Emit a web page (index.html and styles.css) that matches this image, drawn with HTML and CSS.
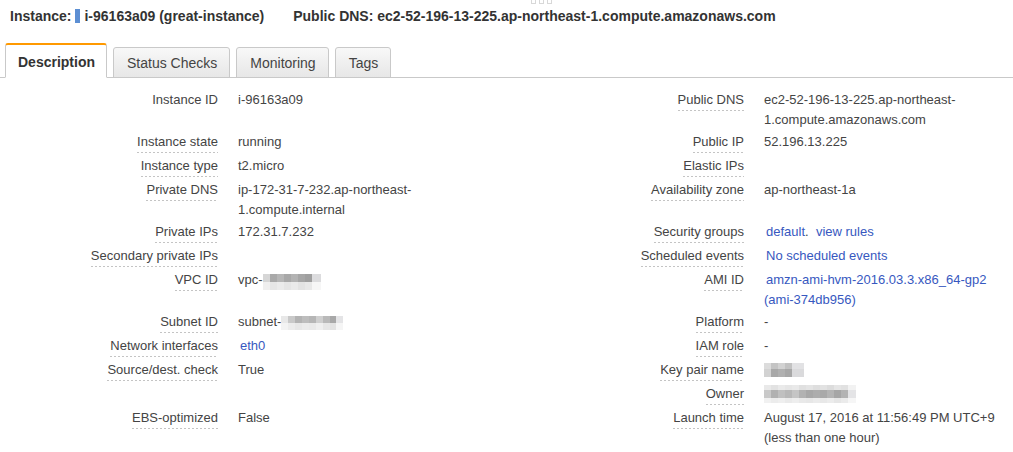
FILE: index.html
```html
<!DOCTYPE html>
<html lang="en">
<head>
<meta charset="utf-8">
<title>Instance details</title>
<link rel="stylesheet" href="styles.css">
</head>
<body>
<div class="grip"><span></span><span></span><span></span></div>
<header class="summary">
  <span class="summary-item"><b>Instance:</b> <span class="state-bar"></span><b>i-96163a09 (great-instance)</b></span>
  <span class="summary-item"><b>Public DNS: ec2-52-196-13-225.ap-northeast-1.compute.amazonaws.com</b></span>
</header>
<nav class="tabs">
  <div class="tab tab-active">Description</div>
  <div class="tab">Status Checks</div>
  <div class="tab">Monitoring</div>
  <div class="tab">Tags</div>
</nav>
<section class="details">
  <div class="lbl"><span class="plain">Instance ID</span></div>
  <div class="val">i-96163a09</div>
  <div class="lbl"><span>Public DNS</span></div>
  <div class="val">ec2-52-196-13-225.ap-northeast-<wbr>1.compute.amazonaws.com</div>

  <div class="lbl"><span>Instance state</span></div>
  <div class="val">running</div>
  <div class="lbl"><span>Public IP</span></div>
  <div class="val">52.196.13.225</div>

  <div class="lbl"><span>Instance type</span></div>
  <div class="val">t2.micro</div>
  <div class="lbl"><span>Elastic IPs</span></div>
  <div class="val"></div>

  <div class="lbl"><span>Private DNS</span></div>
  <div class="val">ip-172-31-7-232.ap-northeast-<wbr>1.compute.internal</div>
  <div class="lbl"><span>Availability zone</span></div>
  <div class="val">ap-northeast-1a</div>

  <div class="lbl"><span>Private IPs</span></div>
  <div class="val">172.31.7.232</div>
  <div class="lbl"><span>Security groups</span></div>
  <div class="val"><a class="link" href="#">default</a>.&nbsp; <a class="link link-tight" href="#">view rules</a></div>

  <div class="lbl"><span>Secondary private IPs</span></div>
  <div class="val"></div>
  <div class="lbl"><span>Scheduled events</span></div>
  <div class="val"><a class="link" href="#">No scheduled events</a></div>

  <div class="lbl"><span>VPC ID</span></div>
  <div class="val">vpc-<span class="redact redact-vpc"></span></div>
  <div class="lbl"><span>AMI ID</span></div>
  <div class="val"><a class="link" href="#">amzn-ami-hvm-2016.03.3.x86_64-gp2 (ami-374db956)</a></div>

  <div class="lbl"><span>Subnet ID</span></div>
  <div class="val">subnet-<span class="redact redact-subnet"></span></div>
  <div class="lbl"><span>Platform</span></div>
  <div class="val">-</div>

  <div class="lbl"><span>Network interfaces</span></div>
  <div class="val"><a class="link" href="#">eth0</a></div>
  <div class="lbl"><span>IAM role</span></div>
  <div class="val">-</div>

  <div class="lbl"><span>Source/dest. check</span></div>
  <div class="val">True</div>
  <div class="lbl"><span>Key pair name</span></div>
  <div class="val"><span class="redact redact-key"></span></div>

  <div class="lbl"></div>
  <div class="val"></div>
  <div class="lbl"><span>Owner</span></div>
  <div class="val"><span class="redact redact-owner"></span></div>

  <div class="lbl"><span>EBS-optimized</span></div>
  <div class="val">False</div>
  <div class="lbl"><span>Launch time</span></div>
  <div class="val"><span class="nowrap">August 17, 2016 at 11:56:49 PM UTC+9</span><span class="sub">(less than one hour)</span></div>
</section>
</body>
</html>
```
FILE: styles.css
```css
html, body {
  margin: 0;
  padding: 0;
  background: #fff;
}
body {
  font-family: "Liberation Sans", Arial, Helvetica, sans-serif;
  color: #444;
  font-size: 13px;
  position: relative;
  width: 1013px;
  overflow: hidden;
}

.grip {
  position: absolute;
  top: -1px;
  left: 531px;
  display: flex;
  gap: 3px;
}
.grip span {
  width: 3px;
  height: 3px;
  border: 1px solid #d8d8d8;
}

.summary {
  display: flex;
  gap: 29px;
  padding: 6px 0 0 10px;
  height: 20px;
  line-height: 20px;
  font-size: 14px;
  color: #333;
}
.summary-item {
  display: flex;
  align-items: center;
  white-space: nowrap;
}
.summary-item b {
  font-weight: bold;
}
.state-bar {
  display: inline-block;
  width: 5px;
  height: 14px;
  background: #5c8fd3;
  margin: 0 4px 0 4px;
}

.tabs {
  display: flex;
  align-items: flex-end;
  gap: 6px;
  margin-top: 17px;
  padding-left: 5px;
  border-bottom: 1px solid #c9c9c9;
  height: 34px;
}
.tab {
  box-sizing: border-box;
  height: 31px;
  margin-bottom: -1px;
  padding: 1px 12px 0 13px;
  line-height: 28px;
  font-size: 14px;
  color: #444;
  border: 1px solid #c9c9c9;
  border-radius: 3px 3px 0 0;
  background: linear-gradient(to bottom, #f8f8f8, #e7e7e7);
  white-space: nowrap;
}
.tab-active {
  height: 35px;
  padding: 2px 11px 0 12px;
  line-height: 30px;
  font-weight: bold;
  color: #333;
  background: #fff;
  border-top: 2px solid #f90;
  border-bottom-color: #fff;
}

.details {
  display: grid;
  grid-template-columns: 218px 282px 244px 1fr;
  padding-top: 11px;
  line-height: 20px;
}
.lbl, .val {
  padding: 1px 0;
}
.lbl {
  display: flex;
  justify-content: flex-end;
  align-items: flex-start;
  white-space: nowrap;
}
.lbl span {
  display: block;
  line-height: 20px;
  padding-bottom: 1px;
  margin-bottom: 1px;
  background: linear-gradient(to right, #c4c4c4 50%, transparent 50%) left bottom / 4px 1px repeat-x;
}
.lbl span.plain {
  background: none;
}
.val {
  padding-left: 20px;
  color: #444;
}

.link {
  color: #3758c0;
  text-decoration: none;
  margin-left: 2px;
}
.link-tight {
  margin-left: 0;
}
.nowrap {
  white-space: nowrap;
}
.sub {
  display: block;
}

.redact {
  display: inline-block;
  vertical-align: -6px;
}
.redact-vpc {
  width: 58px;
  height: 16px;
  background:
    linear-gradient(to right, #d6d6d6 0 7px, #a9a9a9 7px 14px, #b6b6b6 14px 21px, #a8a8a8 21px 28px, #b3b3b3 28px 35px, #a6a6a6 35px 42px, #9f9f9f 42px 49px, #dcdcde 49px 58px) top / 100% 8px no-repeat,
    linear-gradient(to right, #efefef 0 7px, #e6e6e6 7px 14px, #ebebeb 14px 21px, #e5e5e5 21px 28px, #eaeaea 28px 35px, #e3e3e3 35px 42px, #e8e8e8 42px 49px, #f6f6f6 49px 58px) bottom / 100% 8px no-repeat;
}
.redact-subnet {
  width: 62px;
  height: 14px;
  vertical-align: -4px;
  background:
    linear-gradient(to right, #e8e8e8 0 7px, #c9c9c9 7px 14px, #b3b3b3 14px 21px, #bdbdbd 21px 28px, #b6b6b6 28px 35px, #cfcfcf 35px 42px, #b9b9b9 42px 49px, #a8a8a8 49px 55px, #e4e4e6 55px 62px) top / 100% 7px no-repeat,
    linear-gradient(to right, #f3f3f3 0 7px, #ececec 7px 14px, #e7e7e7 14px 21px, #ebebeb 21px 28px, #e9e9e9 28px 35px, #efefef 35px 42px, #e6e6e6 42px 49px, #e2e2e2 49px 55px, #f5f5f5 55px 62px) bottom / 100% 7px no-repeat;
}
.redact-key {
  width: 40px;
  height: 14px;
  vertical-align: -3px;
  background:
    linear-gradient(to right, #dcdcdc 0 7px, #c4c4c4 7px 14px, #d2d2d2 14px 21px, #c2c2c2 21px 28px, #e2e2e4 28px 40px) top / 100% 6px no-repeat,
    linear-gradient(to right, #d2d2d2 0 7px, #a8a8a8 7px 14px, #b0b0b0 14px 21px, #a7a7a7 21px 28px, #dadadc 28px 40px) bottom / 100% 8px no-repeat;
}
.redact-owner {
  width: 92px;
  height: 18px;
  vertical-align: -5px;
  background:
    linear-gradient(to right, #e9e9e9 0 7px, #e2e2e2 7px 14px, #eaeaea 14px 21px, #e6e6e6 21px 28px, #e9e9e9 28px 35px, #e0e0e0 35px 42px, #e4e4e4 42px 49px, #dedede 49px 56px, #e2e2e2 56px 63px, #dcdcdc 63px 70px, #e5e5e5 70px 77px, #e1e1e1 77px 84px, #f2f2f2 84px 92px) top / 100% 5px no-repeat,
    linear-gradient(to right, #c9c9c9 0 7px, #b1b1b1 7px 14px, #c0c0c0 14px 21px, #b8b8b8 21px 28px, #c5c5c5 28px 35px, #b2b2b2 35px 42px, #a8a8a8 42px 49px, #adadad 49px 56px, #a9a9a9 56px 63px, #b4b4b4 63px 70px, #a6a6a6 70px 77px, #b3b3b3 77px 84px, #e4e4e6 84px 92px) center / 100% 8px no-repeat,
    linear-gradient(to right, #f1f1f1 0 7px, #ececec 7px 14px, #efefef 14px 21px, #eaeaea 21px 28px, #eeeeee 28px 35px, #e9e9e9 35px 42px, #e7e7e7 42px 49px, #ebebeb 49px 56px, #e8e8e8 56px 63px, #ececec 63px 70px, #e6e6e6 70px 77px, #ebebeb 77px 84px, #f6f6f6 84px 92px) bottom / 100% 5px no-repeat;
}
```
